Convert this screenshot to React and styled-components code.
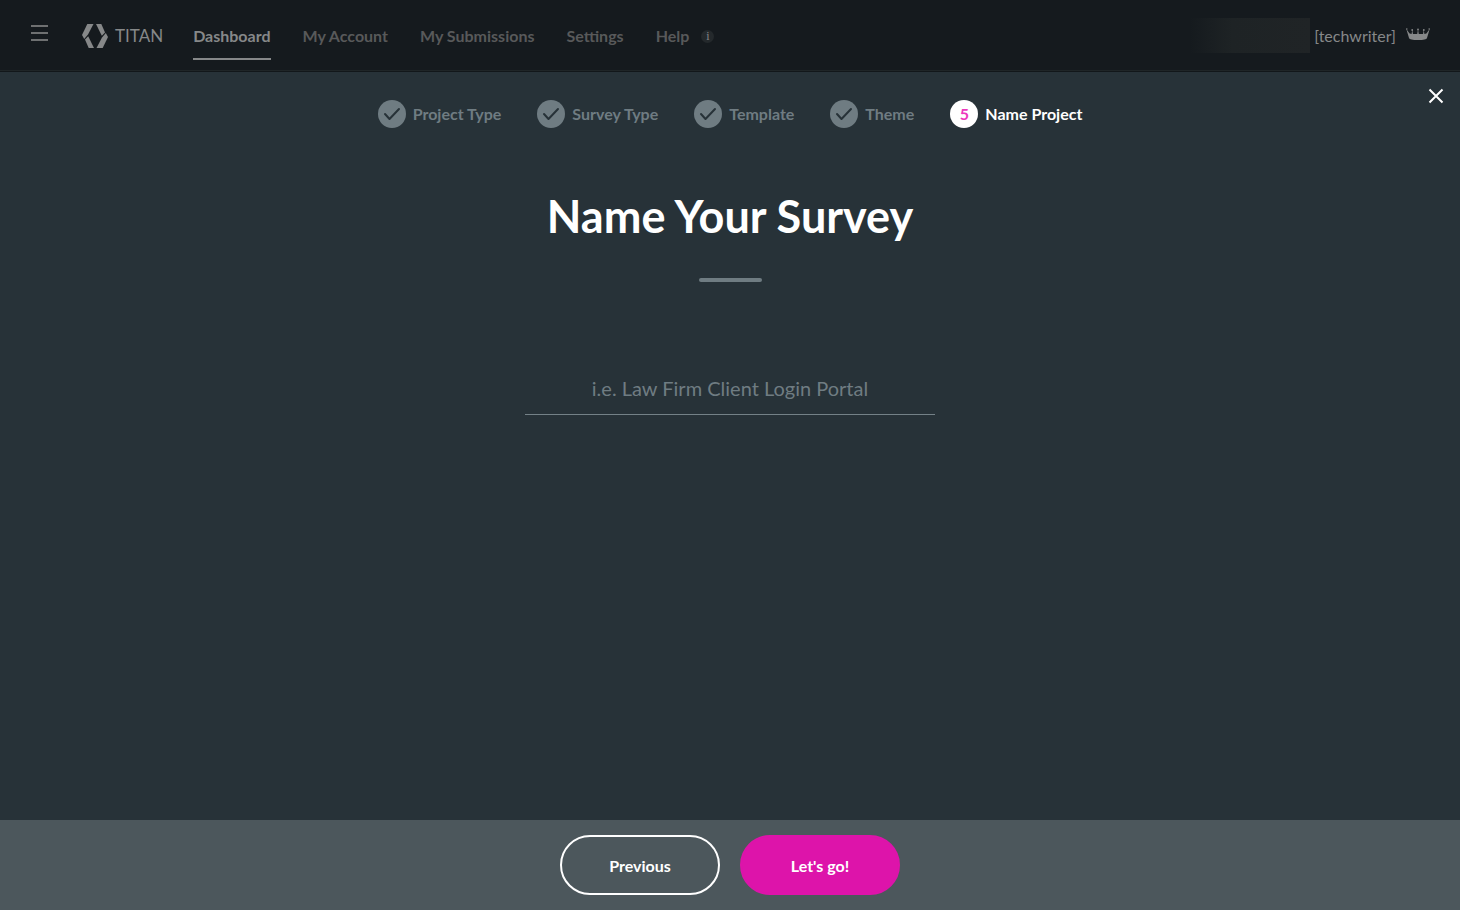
import { useState } from 'react';
import styled, { createGlobalStyle } from 'styled-components';

const GlobalStyle = createGlobalStyle`
  * {
    box-sizing: border-box;
  }
  body {
    margin: 0;
    background: #273238;
    font-family: Lato, "Liberation Sans", sans-serif;
    font-size: 16px;
  }
  button, input {
    font-family: inherit;
  }
`

const Page = styled.div`
  display: flex;
  flex-direction: column;
  min-height: 100vh;
`

const Header = styled.header`
  display: flex;
  align-items: center;
  height: 72px;
  padding: 0 30px;
  background: #151a1e;
  border-bottom: 1px solid #12171a;
  box-shadow: inset 0 -1px 0 #1f2527;
`

const MenuButton = styled.button`
  display: flex;
  margin: 0 33px 6px 0;
  padding: 0;
  border: 0;
  background: none;
  cursor: pointer;
`

const Logo = styled.a`
  display: flex;
  align-items: center;
  gap: 7px;
  margin-right: 30px;
  color: #868889;
  font-size: 17px;
  line-height: 24px;
  text-decoration: none;
`

const Nav = styled.nav`
  display: flex;
  flex: 1;
  gap: 32px;
`

const NavLink = styled.a`
  padding: 12px 0 10px;
  border-bottom: 2px solid ${props => props.$active ? '#868889' : 'transparent'};
  color: ${props => props.$active ? '#868889' : '#58595a'};
  font-weight: bold;
  line-height: 24px;
  text-decoration: none;
`

const HelpItem = styled.div`
  display: flex;
  align-items: center;
  gap: 12px;
`

const InfoBadge = styled.span`
  display: grid;
  place-items: center;
  width: 13px;
  height: 13px;
  margin-top: 2px;
  border-radius: 50%;
  background: #24292c;
  color: #858788;
  font-family: "Liberation Serif", serif;
  font-size: 12px;
  line-height: 13px;
`

const User = styled.div`
  display: flex;
  align-items: center;
  color: #868889;
  line-height: 24px;
`

const HiddenName = styled.span`
  width: 120px;
  height: 35px;
  margin-right: 4px;
  background: linear-gradient(to right, #151a1e, #1e2325 35%, #202426);
`

const Crown = styled.svg`
  margin: 0 0 4px 10px;
`

const Main = styled.main`
  display: flex;
  flex: 1;
  flex-direction: column;
  align-items: center;
  position: relative;
  padding: 28px 30px;
`

const CloseButton = styled.button`
  display: flex;
  position: absolute;
  top: 16px;
  right: 16px;
  padding: 0;
  border: 0;
  background: none;
  cursor: pointer;
`

const Steps = styled.ol`
  display: flex;
  flex-wrap: wrap;
  justify-content: center;
  gap: 36px;
  margin: 0;
  padding: 0;
  list-style: none;
`

const Step = styled.li`
  display: flex;
  align-items: center;
  gap: 7px;
  color: ${props => props.$current ? '#fff' : '#6f7c82'};
  font-weight: bold;
  line-height: 28px;
`

const StepCircle = styled.span`
  display: grid;
  place-items: center;
  width: 28px;
  height: 28px;
  border-radius: 50%;
  background: ${props => props.$current ? '#fff' : '#6f7c82'};
  color: #ec38bc;
`

const Title = styled.h1`
  margin: 60px 0 34px;
  color: #fff;
  font-size: 45px;
  font-weight: bold;
  line-height: 56px;
  text-align: center;
`

const Divider = styled.div`
  width: 63px;
  height: 4px;
  border-radius: 2px;
  background: #6f7c82;
`

const NameInput = styled.input`
  width: 100%;
  max-width: 410px;
  height: 53px;
  margin-top: 80px;
  padding: 0;
  border: 0;
  border-bottom: 1px solid #748187;
  outline: 0;
  background: none;
  color: #fff;
  font-size: 20px;
  text-align: center;
  &::placeholder {
    color: #6f7c82;
    opacity: 1;
  }
`

const Footer = styled.footer`
  display: flex;
  justify-content: center;
  gap: 20px;
  padding: 15px 30px;
  background: #4c575c;
`

const Button = styled.button`
  width: 160px;
  height: 60px;
  padding: 0;
  border: 2px solid ${props => props.$primary ? '#dd14aa' : '#fff'};
  border-radius: 30px;
  background: ${props => props.$primary ? '#dd14aa' : 'transparent'};
  color: #fff;
  font-size: 16px;
  font-weight: bold;
  cursor: pointer;
`

const links = ['Dashboard', 'My Account', 'My Submissions', 'Settings']
const steps = ['Project Type', 'Survey Type', 'Template', 'Theme', 'Name Project']

function CheckIcon() {
  return (
    <svg width="28" height="28" viewBox="0 0 28 28" fill="none" stroke="#273238" strokeWidth="2" strokeLinecap="round" strokeLinejoin="round">
      <path d="M7 14 11.5 19 21 9" />
    </svg>
  )
}

function App() {
  const [name, setName] = useState('')

  return (
    <>
      <GlobalStyle />
      <Page>
        <Header>
          <MenuButton aria-label="Menu">
            <svg width="19" height="18" viewBox="0 0 19 18" stroke="#6e7071" strokeWidth="2">
              <path d="M1 2h17M1 9h17M1 16h17" />
            </svg>
          </MenuButton>
          <Logo href="#">
            <svg width="26" height="24" viewBox="0 0 26 24" fill="#868889">
              <path d="M5.3 0h6.2L6 10.5 2.2 15 0 11z" />
              <path d="M3 15.5 6.2 12.2 12 24H6.7z" />
              <path d="M20.7 24h-6.2L20 13.5 23.8 9 26 13z" />
              <path d="M23 8.5 19.8 11.8 14 0h5.3z" />
            </svg>
            TITAN
          </Logo>
          <Nav>
            {links.map((link, i) => (
              <NavLink key={link} href="#" $active={i === 0}>{link}</NavLink>
            ))}
            <HelpItem>
              <NavLink href="#">Help</NavLink>
              <InfoBadge>i</InfoBadge>
            </HelpItem>
          </Nav>
          <User>
            <HiddenName />
            [techwriter]
            <Crown width="24" height="13" viewBox="0 0 24 13" fill="#868889">
              <path d="M.3 2 3.6 6.5 5.6 7 6.2 3 7 7 11.2 7 12 2.5 12.8 7 17 7 17.8 3 18.4 7 20.4 6.5 23.7 2 21 11Q20.5 13 12 13T3 11z" />
              <circle cx=".8" cy="2" r=".8" />
              <circle cx="6.2" cy="3" r=".9" />
              <circle cx="12" cy="2.5" r=".9" />
              <circle cx="17.8" cy="3" r=".9" />
              <circle cx="23.2" cy="2" r=".8" />
            </Crown>
          </User>
        </Header>

        <Main>
          <CloseButton aria-label="Close">
            <svg width="16" height="16" viewBox="0 0 16 16" stroke="#fff" strokeWidth="2">
              <path d="M1.5 1.5 14.5 14.5M14.5 1.5 1.5 14.5" />
            </svg>
          </CloseButton>
          <Steps>
            {steps.map((step, i) => {
              const current = i === steps.length - 1
              return (
                <Step key={step} $current={current}>
                  <StepCircle $current={current}>{current ? i + 1 : <CheckIcon />}</StepCircle>
                  {step}
                </Step>
              )
            })}
          </Steps>
          <Title>Name Your Survey</Title>
          <Divider />
          <NameInput
            aria-label="Survey name"
            placeholder="i.e. Law Firm Client Login Portal"
            value={name}
            onChange={e => setName(e.target.value)}
          />
        </Main>

        <Footer>
          <Button>Previous</Button>
          <Button $primary>Let's go!</Button>
        </Footer>
      </Page>
    </>
  );
}

export default App;
